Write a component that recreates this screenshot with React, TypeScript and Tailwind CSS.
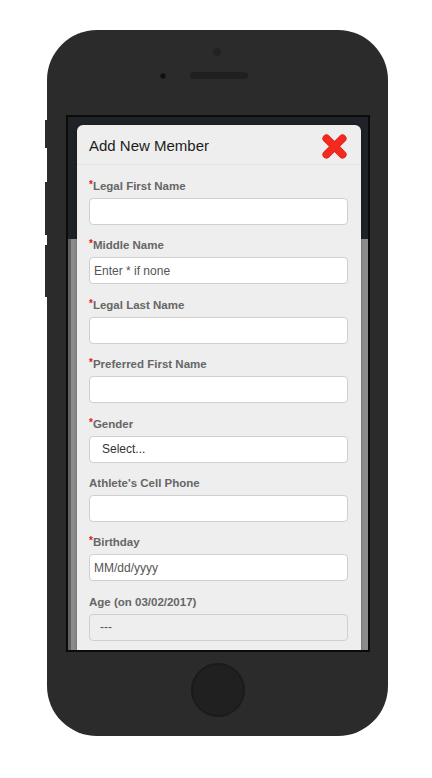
type Field = {
  label: string;
  required?: boolean;
  text?: string;
  kind?: "input" | "select" | "disabled";
};

const fields: Field[] = [
  { label: "Legal First Name", required: true },
  { label: "Middle Name", required: true, text: "Enter * if none" },
  { label: "Legal Last Name", required: true },
  { label: "Preferred First Name", required: true },
  { label: "Gender", required: true, text: "Select...", kind: "select" },
  { label: "Athlete's Cell Phone" },
  { label: "Birthday", required: true, text: "MM/dd/yyyy" },
  { label: "Age (on 03/02/2017)", text: "---", kind: "disabled" },
];

function CloseIcon() {
  return (
    <svg width="25" height="25" viewBox="0 0 25 25">
      <g stroke="#d8221a" strokeWidth="8" strokeLinecap="round">
        <line x1="4.5" y1="4.5" x2="20.5" y2="20.5" />
        <line x1="20.5" y1="4.5" x2="4.5" y2="20.5" />
      </g>
      <g stroke="#f4291f" strokeWidth="6.5" strokeLinecap="round">
        <line x1="4.5" y1="4.5" x2="20.5" y2="20.5" />
        <line x1="20.5" y1="4.5" x2="4.5" y2="20.5" />
      </g>
    </svg>
  );
}

function FormField({ field }: { field: Field }) {
  const kind = field.kind ?? "input";
  return (
    <div className="mb-[13.4px]">
      <div className="text-[11.5px] leading-[14px] font-bold text-[#666]">
        {field.required && (
          <span className="relative top-[-1px] text-[#e4141b] text-[10px] align-top">*</span>
        )}
        {field.label}
      </div>
      <div
        className={`mt-[5px] h-[27px] rounded-[4px] border border-[#cfcfcf] flex items-center text-[12px] ${
          kind === "disabled"
            ? "bg-[#eeeeee] text-[#555] pl-[10px]"
            : kind === "select"
            ? "bg-white text-[#333] pl-[12px]"
            : "bg-white text-[#555] pl-[4px]"
        }`}
      >
        {field.text}
      </div>
    </div>
  );
}

export default function App() {
  return (
    <div className="min-h-[778px] bg-white pt-[30px] font-['Liberation_Sans',Arial,sans-serif]">
      <div className="relative ml-[47px] w-[341px] h-[706px] rounded-[50px] bg-[#2a2b2a]">
        {/* side buttons */}
        <div className="absolute left-[-2px] top-[90px] w-[2px] h-[28px] bg-[#2a2b2a]" />
        <div className="absolute left-[-2px] top-[152px] w-[2px] h-[53px] bg-[#2a2b2a]" />
        <div className="absolute left-[-2px] top-[215px] w-[2px] h-[52px] bg-[#2a2b2a]" />

        <div className="pt-[18px] flex flex-col">
          <div className="self-center ml-[-1px] w-[8px] h-[8px] rounded-full bg-[#222322]" />
          <div className="mt-[16px] flex items-center pl-[113px] h-[7px]">
            <div className="w-[6px] h-[6px] rounded-full bg-[#0e0e0e] border border-[#1a1a1a]" />
            <div className="ml-[24px] w-[58px] h-[7px] rounded-full bg-[#1f201f]" />
          </div>

          {/* screen */}
          <div className="relative mt-[36px] ml-[19px] w-[304px] h-[537px] border-2 border-[#0b0b0b] overflow-hidden">
            <div className="absolute inset-0 flex flex-col">
              <div className="h-[122px] bg-[#1f2226]" />
              <div className="flex-1 bg-[#8b8b8b] border-l-[3px] border-[#616161]" />
            </div>

            <div className="relative mt-[8px] ml-[9px] w-[284px] h-[600px] rounded-t-[6px] bg-[#eeeeee] shadow-[0_0_3px_rgba(0,0,0,0.3)]">
              <div className="h-[40px] flex items-center justify-between pt-[3px] pl-[12px] pr-[14px] border-b border-[#e2e2e2]">
                <span className="text-[15px] text-[#1c1c1c]">Add New Member</span>
                <CloseIcon />
              </div>
              <div className="pt-[14px] pl-[12px] pr-[13px]">
                {fields.map((f) => (
                  <FormField key={f.label} field={f} />
                ))}
              </div>
            </div>
          </div>

          {/* home button */}
          <div className="self-center mt-[11px] w-[54px] h-[54px] rounded-full bg-[#1f201f] border-2 border-[#1a1b1a]" />
        </div>
      </div>
    </div>
  );
}
